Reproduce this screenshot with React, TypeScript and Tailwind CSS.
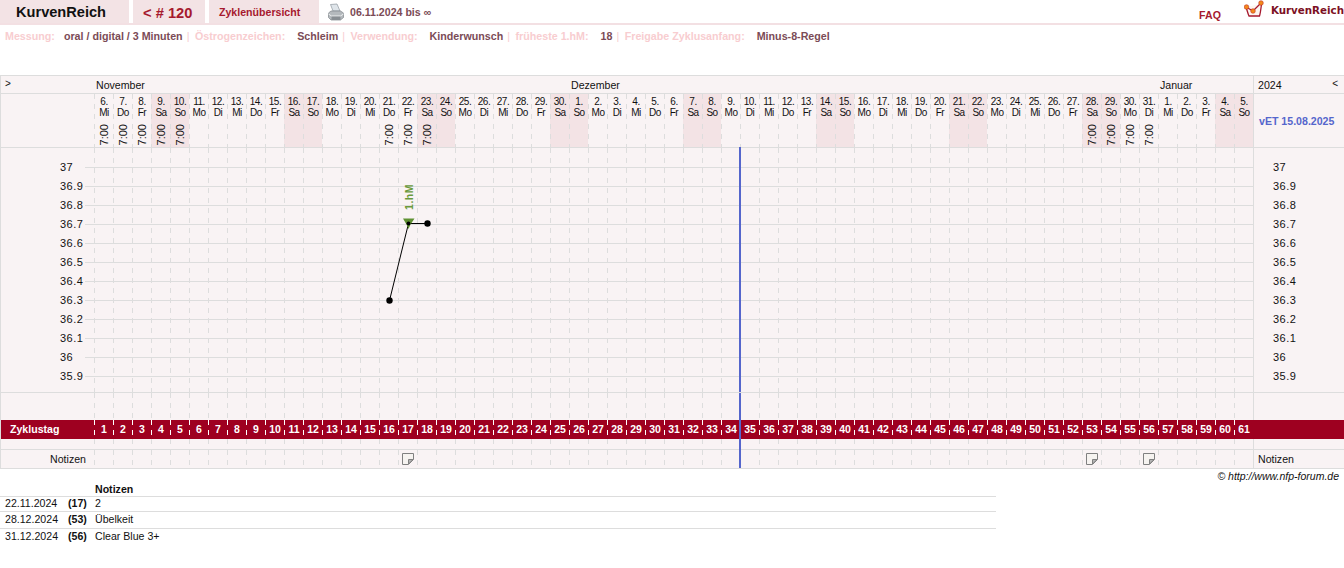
import React from 'react';

const FONT = "font-['Liberation_Sans',Arial,sans-serif]";
const WD = ['So', 'Mo', 'Di', 'Mi', 'Do', 'Fr', 'Sa'];

// 61 days starting with 6.11.2024
const days = Array.from({ length: 61 }, (_, i) => {
  const d = new Date(2024, 10, 6 + i);
  return { day: d.getDate(), wd: WD[d.getDay()], weekend: d.getDay() === 0 || d.getDay() === 6 };
});
const timed = [0, 1, 2, 3, 4, 15, 16, 17, 52, 53, 54, 55];
const temps = ['37', '36.9', '36.8', '36.7', '36.6', '36.5', '36.4', '36.3', '36.2', '36.1', '36', '35.9'];
const noteDays = [16, 52, 55];
const dash = 'bg-[linear-gradient(#dddddd_0_5px,transparent_5px)] bg-[length:1px_10px] bg-repeat-y';
const dashWhite = 'bg-[linear-gradient(#ffffff_0_5px,transparent_5px)] bg-[length:1px_10px] bg-repeat-y';

function Info({ label, value, first, last }: { label: string; value: string; first?: boolean; last?: boolean }) {
  return (
    <>
      <span className="text-[#f8cdd0]">{label}</span>
      <span className={`${first ? 'ml-[9px]' : 'ml-[12px]'} text-[#7b4b56]`}>{value}</span>
      {!last && <span className="ml-[4px] mr-[5.5px] font-normal text-[#f8cdd0]">|</span>}
    </>
  );
}

function NoteIcon() {
  return (
    <svg width="12" height="12" viewBox="0 0 12 12" className="block">
      <path d="M.5 .5H11.5V6.5L6.5 11.5H.5Z" fill="#f6f3f0" stroke="#808080" />
      <path d="M6.5 11V6.5H11Z" fill="#b4b4b4" stroke="#808080" />
    </svg>
  );
}

function Columns() {
  return (
    <div className="flex h-full w-[1159px]">
      {days.map((d) => (
        <div key={d.day + d.wd} className={`w-[19px] h-full ${dash}`} />
      ))}
    </div>
  );
}

export default function App() {
  return (
    <div className={`${FONT} w-[1344px] h-[568px] bg-white overflow-hidden relative text-[10.6px] text-[#111]`}>
      {/* top bar */}
      <div className="flex h-[25px] items-stretch border-b-2 border-[#f3e0e3]">
        <div className="w-[129px] bg-[#f3e3e5] pl-[16px] pt-[4px] text-[14.6px] leading-[17px] font-bold text-[#111]">KurvenReich</div>
        <div className="ml-[4px] w-[72px] bg-[#f3e3e5] pl-[10px] pt-[4px] text-[14.7px] leading-[18px] font-bold text-[#a6192e]">&lt; # 120</div>
        <div className="ml-[4px] w-[110px] bg-[#f3e3e5] pl-[10px] pt-[6px] leading-[13px] font-bold text-[#a6192e]">Zyklenübersicht</div>
        <div className="ml-[9px] pt-[3px]">
          <svg width="16" height="18" viewBox="0 0 16 18">
            <path d="M2.5 1.5L9 1L12 8H5Z" fill="#dfe5ea" stroke="#8e979e" strokeWidth=".7" />
            <path d="M.5 10L3 8H12.5L15.5 10V14.5L12.5 17H3L.5 14.5Z" fill="#b4b9bd" stroke="#7f858a" strokeWidth=".7" />
            <path d="M.5 11L3.5 13H12.5L15.5 11" fill="none" stroke="#eef0f1" />
            <path d="M3.5 13.5H12.5V17H3.5Z" fill="#888e93" />
          </svg>
        </div>
        <div className="ml-[6px] pt-[6px] leading-[13px] font-bold text-[#7b4b56]">06.11.2024 bis ∞</div>
        <div className="ml-auto pt-[9px] leading-[13px] font-bold text-[#a6192e]">FAQ</div>
        <div className="ml-[23px]">
          <svg width="22" height="20" viewBox="0 0 22 20">
            <path d="M2 7C3 10 4 14 5 16H15.5C16.5 13 17 8 17.5 4" fill="#fdf6f0" stroke="#a6192e" strokeWidth="1.3" />
            <path d="M2 7L9 11L17 3" fill="none" stroke="#a6192e" strokeWidth="1.3" />
            <circle cx="2.5" cy="7" r="2.3" fill="#f28a1c" stroke="#c4301c" strokeWidth=".6" />
            <circle cx="9" cy="11" r="2.3" fill="#f28a1c" stroke="#c4301c" strokeWidth=".6" />
            <circle cx="17" cy="3" r="2.3" fill="#f28a1c" stroke="#c4301c" strokeWidth=".6" />
          </svg>
        </div>
        <div className="ml-[5px] pt-[3px] font-['DejaVu_Sans',sans-serif] text-[10.3px] leading-[14px] font-bold text-[#7c1024]">KurvenReich</div>
      </div>

      {/* settings line */}
      <div className="pl-[5px] pt-[5px] h-[50px] text-[10.7px] leading-[13px] font-bold whitespace-nowrap">
        <Info label="Messung:" value="oral / digital / 3 Minuten" first />
        <Info label="Östrogenzeichen:" value="Schleim" />
        <Info label="Verwendung:" value="Kinderwunsch" />
        <Info label="früheste 1.hM:" value="18" />
        <Info label="Freigabe Zyklusanfang:" value="Minus-8-Regel" last />
      </div>

      {/* chart table */}
      <div className="relative border-l border-t border-b border-[#dddddd] bg-[#f9f3f4]">
        {/* month row */}
        <div className="flex h-[18px] border-b border-[#dddddd] leading-[18px]">
          <div className="w-[93px] pl-[4px] text-[10px] leading-[15px]">&gt;</div>
          <div className="w-[475px] pl-[2px]">November</div>
          <div className="w-[589px] pl-[2px]">Dezember</div>
          <div className="w-[95px] pl-[2px]">Januar</div>
          <div className="flex flex-1 justify-between border-l border-[#dddddd] pl-[4px] pr-[6px]">
            <span>2024</span>
            <span className="text-[10px] leading-[15px]">&lt;</span>
          </div>
        </div>

        {/* day headers */}
        <div className="flex h-[54px] border-b border-[#dddddd]">
          <div className="w-[93px]" />
          {days.map((d, i) => (
            <div
              key={i}
              className={`w-[19px] relative pl-px text-center text-[10px] leading-[10.5px] tracking-[-0.5px] pt-[3px] ${d.weekend ? 'bg-[#f3e3e5]' : ''} ${dash}`}
            >
              <div>{d.day}.</div>
              <div>{d.wd}</div>
              {timed.includes(i) && (
                <div className="absolute left-[5px] bottom-[2px] text-[11px] leading-[11px] tracking-normal [writing-mode:vertical-rl] rotate-180">7:00</div>
              )}
            </div>
          ))}
          <div className="flex flex-1 items-center border-l border-[#dddddd] pl-[5px] pt-[2px] font-bold text-[#5566cc]">vET 15.08.2025</div>
        </div>

        {/* temperature grid */}
        <div className="relative h-[245px] border-b border-[#dddddd] pt-[10px]">
          {temps.map((t) => (
            <div key={t} className="flex h-[19px] items-center tracking-[0.5px] leading-[13px] text-[11px]">
              <div className="w-[84px] pl-[59px]">{t}</div>
              <div className="h-px w-[1168px] bg-[#dddddd]" />
              <div className="border-l border-[#dddddd] h-[19px] pl-[19px] leading-[19px]">{t}</div>
            </div>
          ))}
          <div className="absolute left-[1252px] top-0 h-[10px] border-l border-[#dddddd]" />
          <div className="absolute left-[1252px] bottom-0 h-[6px] border-l border-[#dddddd]" />
          {/* dashes + curve lie over the grid */}
          <div className="absolute top-0 bottom-0 left-[93px]"><Columns /></div>
          <svg className="absolute left-[-1px] top-0" width="1254" height="244">
            <path d="M389.5 152.5L408.5 75.5H427.5" fill="none" stroke="#000" strokeWidth="1" />
            <path d="M403 70.5H414.5L410.5 76.5L408.5 81L406.5 76.5Z" fill="#5f9132" />
            <circle cx="389.5" cy="152.5" r="3.2" fill="#000" />
            <circle cx="408.5" cy="75.5" r="2" fill="#000" />
            <circle cx="427.5" cy="75.5" r="3.2" fill="#000" />
          </svg>
          <div className="absolute left-[403px] top-[36px] text-[10.5px] leading-[11px] font-bold text-[#6a9a3c] [writing-mode:vertical-rl] rotate-180 tracking-[0.5px]">1.hM</div>
          <div className="absolute left-[738px] -top-px bottom-0 w-[2px] bg-[#5566cc]" />
        </div>

        {/* empty band */}
        <div className="relative flex h-[27px]">
          <div className="w-[93px]" />
          <Columns />
          <div className="flex-1 border-l border-[#dddddd]" />
          <div className="absolute left-[738px] top-0 bottom-0 w-[2px] bg-[#5566cc]" />
        </div>

        {/* cycle day row */}
        <div className="relative flex h-[19px] bg-[#9e0020] font-bold leading-[19px] text-white">
          <div className="w-[93px] pl-[9px]">Zyklustag</div>
          {days.map((_, i) => (
            <div key={i} className={`w-[19px] pl-px text-center text-[10.5px] ${dashWhite}`}>
              {i + 1}
            </div>
          ))}
          <div className="absolute left-[738px] top-0 bottom-0 w-[2px] bg-[#5566cc]" />
        </div>

        {/* spacer */}
        <div className="relative flex h-[11px] border-b border-[#dddddd]">
          <div className="w-[93px]" />
          <Columns />
          <div className="flex-1 border-l border-[#dddddd]" />
          <div className="absolute left-[738px] top-0 bottom-[-1px] w-[2px] bg-[#5566cc]" />
        </div>

        {/* notes row */}
        <div className="relative flex h-[18px] leading-[18px]">
          <div className="w-[85px] text-right">Notizen</div>
          <div className="w-[8px]" />
          {days.map((_, i) => (
            <div key={i} className={`w-[19px] flex items-center justify-center ${dash}`}>
              {noteDays.includes(i) && <NoteIcon />}
            </div>
          ))}
          <div className="flex-1 border-l border-[#dddddd] pl-[4px]">Notizen</div>
          <div className="absolute left-[738px] top-0 bottom-0 w-[2px] bg-[#5566cc]" />
        </div>
      </div>

      <div className="pr-[5px] pt-px text-right text-[10.5px] leading-[13px] italic">© http://www.nfp-forum.de</div>

      {/* note list */}
      <div className="w-[996px] leading-[13px]">
        <div className="h-[14px] border-b border-[#dddddd] pl-[95px] font-bold">Notizen</div>
        <div className="flex h-[15px] border-b border-[#dddddd] pl-[5px]">
          <span className="w-[63px]">22.11.2024</span><b className="w-[27px]">(17)</b><span>2</span>
        </div>
        <div className="flex h-[17px] border-b border-[#dddddd] pl-[5px] pt-px">
          <span className="w-[63px]">28.12.2024</span><b className="w-[27px]">(53)</b><span>Übelkeit</span>
        </div>
        <div className="flex h-[15px] pl-[5px] pt-px">
          <span className="w-[63px]">31.12.2024</span><b className="w-[27px]">(56)</b><span>Clear Blue 3+</span>
        </div>
      </div>
    </div>
  );
}
